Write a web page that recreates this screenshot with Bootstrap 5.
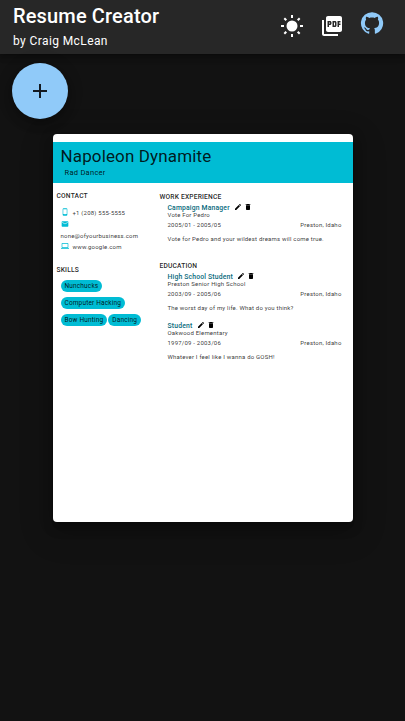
<!DOCTYPE html>
<html lang="en">
<head>
<meta charset="utf-8">
<meta name="viewport" content="width=device-width, initial-scale=1">
<title>Resume Creator</title>
<link href="https://cdn.jsdelivr.net/npm/bootstrap@5.3.0/dist/css/bootstrap.min.css" rel="stylesheet">
<style>
body{background:#121212;font-family:Roboto,sans-serif;min-height:721px;overflow:hidden}
.topbar{height:54px;background:#272727;padding:4px 21px 0 13px;box-shadow:0 2px 4px -1px rgba(0,0,0,.2),0 4px 5px rgba(0,0,0,.14),0 1px 10px rgba(0,0,0,.12)}
.app-title{font-size:20px;font-weight:500;line-height:24px;letter-spacing:.15px}
.app-by{font-size:12px;line-height:16px;letter-spacing:.4px;margin-top:5px}
.tool{width:24px;height:24px;margin:10px 16px 0 0}
.tool-github{margin:7px 0 0}
.fab{width:56px;height:56px;margin:9px 0 0 12px;background:#90caf9;color:rgba(0,0,0,.87);box-shadow:0 3px 5px -1px rgba(0,0,0,.2),0 6px 10px rgba(0,0,0,.14),0 1px 18px rgba(0,0,0,.12)}
.paper{width:300px;height:388px;margin:15px 0 0 53px;padding-top:8px;border-radius:4px;color:rgba(0,0,0,.87);box-shadow:0 5px 5px -3px rgba(0,0,0,.2),0 8px 10px 1px rgba(0,0,0,.14),0 3px 14px 2px rgba(0,0,0,.12),0 9px 30px 8px rgba(0,0,0,.1)}
.banner{height:41px;background:#00bcd4;padding:4px 7.5px 0}
.person{font-size:17px;line-height:20px;letter-spacing:.14px}
.role{font-size:7.5px;line-height:10px;letter-spacing:.28px;padding:2px 0 0 4px}
.side{width:103px;padding:8px 0 0 3.5px}
.main-col{padding:9px 11.5px 0 3.5px}
.sec{font-size:6.7px;font-weight:500;line-height:10px;letter-spacing:.17px}
.tiny{font-size:6px;letter-spacing:.2px;line-height:8px;color:rgba(0,0,0,.8)}
.contact{padding:8px 0 0 4px}
.contact svg{width:8px;height:8px;fill:#00bcd4;margin-right:4px;flex:none;position:relative;top:-1px}
.chip{background:#00bcd4;border-radius:6px;height:12px;line-height:12px;padding:0 4px;font-size:6.5px;letter-spacing:.16px}
.entry{padding-left:8px;margin-top:2px}
.entry .tiny + .tiny{margin-top:2px}
.entry .tiny + .tiny + .tiny{margin-top:6px}
.entry + .entry{margin-top:10px}
.job{font-size:6.8px;font-weight:500;height:7px;letter-spacing:.17px;color:#086a7c}
.job span{line-height:7px;padding-top:2px}
.job svg{width:8px;height:8px;fill:#000;margin:-1px 0 0 2px}
.job span + svg{margin-left:4.5px}
</style>
</head>
<body>
<header class="topbar d-flex justify-content-between text-white">
  <div><div class="app-title">Resume Creator</div><div class="app-by">by Craig McLean</div></div>
  <div class="d-flex">
    <svg class="tool" viewBox="0 0 24 24" fill="none" stroke="#fff" stroke-width="2"><circle cx="12" cy="12" r="5.5" fill="#fff" stroke="none"/><path d="M12 1v3M12 20v3M1 12h3M20 12h3M4.300 4.300l2 2M17.700 17.700l2 2M4.300 19.700l2-2M17.700 6.300l2-2"/></svg>
    <svg class="tool" viewBox="0 0 24 24" fill="#fff"><path d="M20 2H8c-1.100 0-2 .9-2 2v12c0 1.100.9 2 2 2h12c1.100 0 2-.9 2-2V4c0-1.100-.9-2-2-2zm-8.500 7.500c0 .83-.67 1.500-1.500 1.500H9v2H7.500V7H10c.83 0 1.500.67 1.500 1.500zm5 2c0 .83-.67 1.500-1.500 1.500h-2.500V7H15c.83 0 1.500.67 1.500 1.500zm4-3H19v1h1.500V11H19v2h-1.500V7h3zM9 9.500h1v-1H9zM4 6H2v14c0 1.100.9 2 2 2h14v-2H4zm10 5.500h1v-3h-1z"/></svg>
    <svg class="tool tool-github" viewBox="0 0 24 24" fill="#90caf9"><path d="M12 1.270a11 11 0 0 0-3.480 21.460c.55.09.73-.28.73-.55v-1.840c-3.030.64-3.670-1.460-3.670-1.460-.55-1.290-1.280-1.650-1.280-1.650-.92-.65.100-.65.100-.65 1.100 0 1.730 1.100 1.730 1.100.92 1.650 2.570 1.200 3.210.92a2 2 0 0 1 .64-1.470c-2.470-.27-5.040-1.190-5.040-5.500 0-1.100.46-2.100 1.200-2.840a3.760 3.760 0 0 1 0-2.930s.91-.28 3.110 1.100c1.800-.49 3.700-.49 5.500 0 2.100-1.380 3.020-1.100 3.020-1.100a3.760 3.760 0 0 1 .1 2.930c.83.740 1.200 1.740 1.200 2.940 0 4.210-2.570 5.130-5.040 5.400.45.370.82.920.82 2.020v3.030c0 .27.100.640.730.550A11 11 0 0 0 12 1.270"/></svg>
  </div>
</header>
<button class="fab border-0 rounded-circle d-flex align-items-center justify-content-center p-0" aria-label="Add"><svg width="24" height="24" viewBox="0 0 24 24" fill="currentColor"><path d="M19 13h-6v6h-2v-6H5v-2h6V5h2v6h6z"/></svg></button>
<svg class="d-none">
  <symbol id="pen" viewBox="0 0 24 24"><path d="M3 17.250V21h3.750L17.810 9.940l-3.750-3.750zM20.710 7.040a1 1 0 0 0 0-1.410l-2.340-2.340a1 1 0 0 0-1.410 0l-1.830 1.830 3.750 3.750z"/></symbol>
  <symbol id="bin" viewBox="0 0 24 24"><path d="M6 19c0 1.100.9 2 2 2h8c1.100 0 2-.9 2-2V7H6zM19 4h-3.500l-1-1h-5l-1 1H5v2h14z"/></symbol>
</svg>
<main class="paper bg-white">
  <div class="banner"><div class="person">Napoleon Dynamite</div><div class="role">Rad Dancer</div></div>
  <div class="d-flex">
    <aside class="side flex-shrink-0">
      <div class="sec">CONTACT</div>
      <div class="contact tiny">
        <div class="d-flex"><svg viewBox="0 0 24 24"><path d="M16 1H8a3 3 0 0 0-3 3v16a3 3 0 0 0 3 3h8a3 3 0 0 0 3-3V4a3 3 0 0 0-3-3zm-2 20h-4v-1h4zm3.250-3H6.750V4h10.500z"/></svg><span>+1 (208) 555-5555</span></div>
        <div class="d-flex" style="margin-top:4px"><svg viewBox="0 0 24 24"><path d="M20 4H4a2 2 0 0 0-2 2v12a2 2 0 0 0 2 2h16a2 2 0 0 0 2-2V6a2 2 0 0 0-2-2zm0 4l-8 5-8-5V6l8 5 8-5z"/></svg></div>
        <div style="margin-top:3px">none@ofyourbusiness.com</div>
        <div class="d-flex" style="margin-top:3px"><svg viewBox="0 0 24 24"><path d="M20 18a2 2 0 0 0 2-2V5a2 2 0 0 0-2-2H4a2 2 0 0 0-2 2v11a2 2 0 0 0 2 2H0v2h24v-2zM4 5h16v11H4z"/></svg><span>www.google.com</span></div>
      </div>
      <div class="sec" style="margin-top:14px">SKILLS</div>
      <div class="d-flex flex-wrap" style="padding:5px 0 0 4px;gap:5px 1px">
        <span class="chip">Nunchucks</span><span class="w-100 d-flex"><span class="chip">Computer Hacking</span></span><span class="chip">Bow Hunting</span><span class="chip">Dancing</span>
      </div>
    </aside>
    <section class="main-col flex-grow-1">
      <div class="sec">WORK EXPERIENCE</div>
      <article class="entry">
        <div class="job d-flex align-items-center"><span>Campaign Manager</span><svg><use href="#pen"/></svg><svg><use href="#bin"/></svg></div>
        <div class="tiny">Vote For Pedro</div>
        <div class="tiny d-flex justify-content-between"><span>2005/01 - 2005/05</span><span>Preston, Idaho</span></div>
        <div class="tiny">Vote for Pedro and your wildest dreams will come true.</div>
      </article>
      <div class="sec" style="margin-top:18px">EDUCATION</div>
      <article class="entry">
        <div class="job d-flex align-items-center"><span>High School Student</span><svg><use href="#pen"/></svg><svg><use href="#bin"/></svg></div>
        <div class="tiny">Preston Senior High School</div>
        <div class="tiny d-flex justify-content-between"><span>2003/09 - 2005/06</span><span>Preston, Idaho</span></div>
        <div class="tiny">The worst day of my life. What do you think?</div>
      </article>
      <article class="entry">
        <div class="job d-flex align-items-center"><span>Student</span><svg><use href="#pen"/></svg><svg><use href="#bin"/></svg></div>
        <div class="tiny">Oakwood Elementary</div>
        <div class="tiny d-flex justify-content-between"><span>1997/09 - 2003/06</span><span>Preston, Idaho</span></div>
        <div class="tiny">Whatever I feel like I wanna do GOSH!</div>
      </article>
    </section>
  </div>
</main>
<script src="https://cdn.jsdelivr.net/npm/bootstrap@5.3.0/dist/js/bootstrap.bundle.min.js"></script>
</body>
</html>
